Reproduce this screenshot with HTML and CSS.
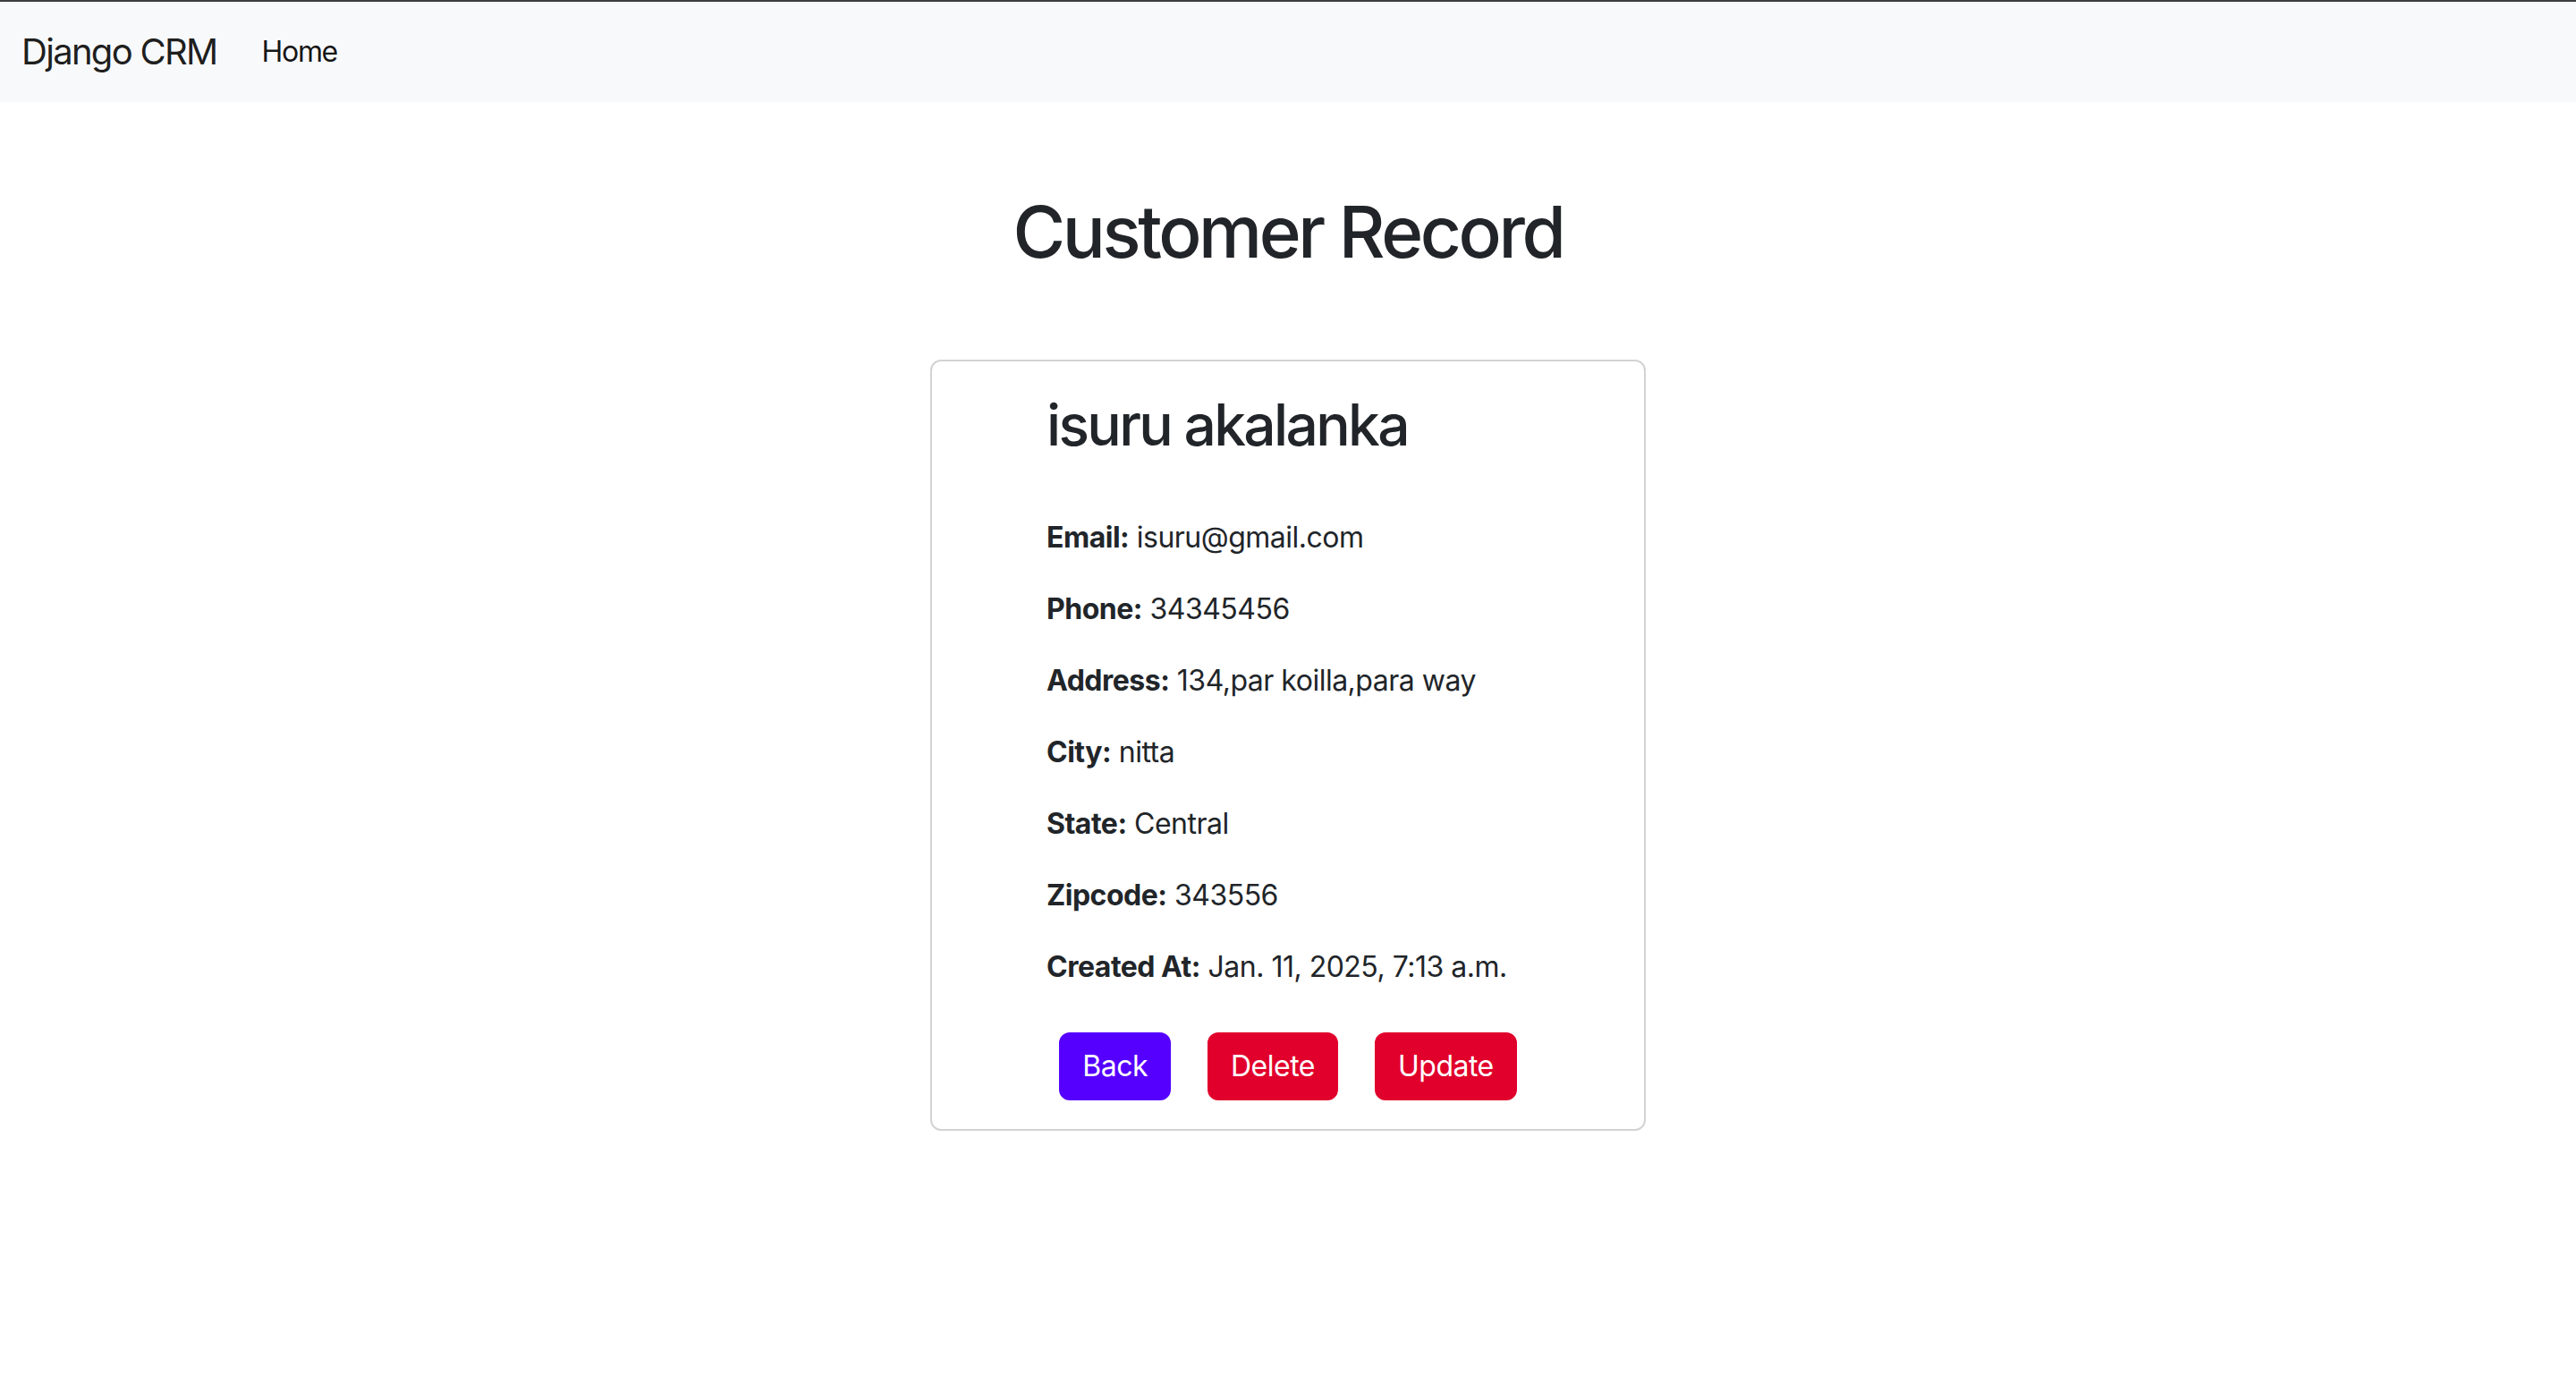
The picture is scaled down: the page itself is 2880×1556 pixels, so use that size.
FILE: index.html
```html
<!DOCTYPE html>
<html lang="en">
<head>
<meta charset="utf-8">
<title>Customer Record</title>
<link rel="stylesheet" href="styles.css">
</head>
<body>
<nav class="navbar">
  <a class="brand" href="#">Django CRM</a>
  <a class="nav-link" href="#">Home</a>
</nav>
<main class="container">
  <h1 class="page-title">Customer Record</h1>
  <div class="card">
    <div class="card-body">
      <div class="details">
        <h2 class="name">isuru akalanka</h2>
        <p><strong>Email:</strong> isuru@gmail.com</p>
        <p><strong>Phone:</strong> 34345456</p>
        <p><strong>Address:</strong> 134,par koilla,para way</p>
        <p><strong>City:</strong> nitta</p>
        <p><strong>State:</strong> Central</p>
        <p><strong>Zipcode:</strong> 343556</p>
        <p><strong>Created At:</strong> Jan. 11, 2025, 7:13 a.m.</p>
      </div>
      <div class="actions">
        <a class="btn btn-back" href="#">Back</a>
        <a class="btn btn-danger" href="#">Delete</a>
        <a class="btn btn-danger" href="#">Update</a>
      </div>
    </div>
  </div>
</main>
</body>
</html>
```

FILE: styles.css
```css
* { box-sizing: border-box; }
html, body { margin: 0; padding: 0; }
body {
  font-family: "Inter", "Roboto", "Liberation Sans", sans-serif;
  font-size: 32px;
  line-height: 1.5;
  color: #212529;
  background: #fff;
  letter-spacing: -0.5px;
}
a { text-decoration: none; }

.navbar {
  display: flex;
  align-items: center;
  background: #f8f9fa;
  border-top: 2px solid #3d3d3d;
  padding: 16px 24px 16px;
}
.brand {
  font-size: 40px;
  line-height: 60px;
  padding: 10px 0;
  color: rgba(0, 0, 0, 0.9);
  margin-right: 34px;
  letter-spacing: -1.7px;
}
.nav-link {
  font-size: 32px;
  line-height: 48px;
  padding: 16px 16px;
  color: rgba(0, 0, 0, 0.92);
  letter-spacing: -1.3px;
}

.container {
  display: flex;
  flex-direction: column;
  align-items: center;
}
.page-title {
  margin: 97px 0 0;
  font-size: 80px;
  line-height: 96px;
  font-weight: 500;
  letter-spacing: -3.4px;
}
.card {
  width: 800px;
  margin-top: 95px;
  border: 2px solid #d3d3d3;
  border-radius: 12px;
  background: #fff;
}
.card-body {
  padding: 32px;
}
.details {
  padding-left: 96px;
}
.name {
  margin: 0 0 64px;
  font-size: 64px;
  line-height: 77px;
  font-weight: 500;
  letter-spacing: -2.65px;
}
.details p {
  margin: 0 0 32px;
  line-height: 48px;
}
.details strong { font-weight: 700; }
.actions {
  display: flex;
  justify-content: center;
  gap: 41px;
  margin-top: 49px;
}
.btn {
  display: inline-block;
  color: #fff;
  font-size: 32px;
  line-height: 48px;
  padding: 12px 24px;
  border: 2px solid transparent;
  border-radius: 12px;
}
.btn-back { background: #5500ff; border-color: #5500ff; }
.btn-danger { background: #e1002b; border-color: #e1002b; }
```
